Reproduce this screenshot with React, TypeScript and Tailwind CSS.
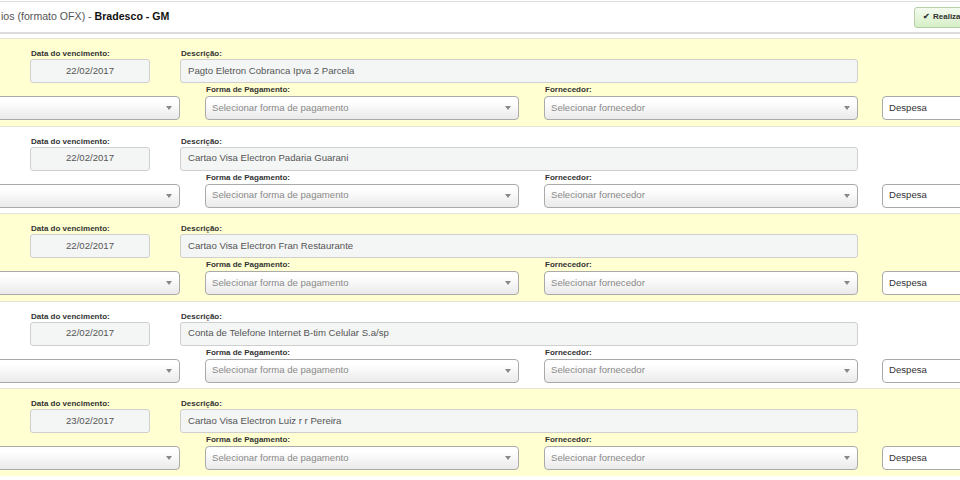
const rows = [
  { date: "22/02/2017", desc: "Pagto Eletron Cobranca Ipva 2 Parcela" },
  { date: "22/02/2017", desc: "Cartao Visa Electron Padaria Guarani" },
  { date: "22/02/2017", desc: "Cartao Visa Electron Fran Restaurante" },
  { date: "22/02/2017", desc: "Conta de Telefone Internet B-tim Celular S.a/sp" },
  { date: "23/02/2017", desc: "Cartao Visa Electron Luiz r r Pereira" },
];

function Label({ text }: { text?: string }) {
  return (
    <div className="h-[10px] leading-[10px] text-[8px] font-bold text-[#333] pl-[1px] whitespace-nowrap">
      {text}
    </div>
  );
}

function Select({ text, placeholder }: { text: string; placeholder?: boolean }) {
  return (
    <div className="mt-[1px] h-[24px] flex items-center justify-between border border-[#aaa] rounded-[4px] bg-gradient-to-b from-white from-[20%] to-[#eaeaea] pl-[6px] pr-[7px]">
      <span className={"text-[9.6px] whitespace-nowrap " + (placeholder ? "text-[#8a8a8a]" : "text-[#444]")}>
        {text}
      </span>
      <svg width="6" height="4" viewBox="0 0 6 4" className="shrink-0">
        <path d="M0 0 L6 0 L3 4 Z" fill="#888" />
      </svg>
    </div>
  );
}

function Row({ date, desc, yellow }: { date: string; desc: string; yellow: boolean }) {
  return (
    <div
      className={
        "h-[87.5px] border-t border-[#e3e3d6] " + (yellow ? "bg-[#ffffd2]" : "bg-white")
      }
    >
      <div className="flex pt-[10px]">
        <div className="ml-[30px] w-[120px] flex flex-col">
          <Label text="Data do vencimento:" />
          <div className="h-[24px] flex items-center justify-center border border-[#cfcfcf] rounded-[3px] bg-[#f4f5f5] text-[9.6px] text-[#555]">
            {date}
          </div>
        </div>
        <div className="ml-[30px] w-[678px] flex flex-col">
          <Label text="Descrição:" />
          <div className="h-[24px] flex items-center border border-[#cfcfcf] rounded-[3px] bg-[#f4f5f5] pl-[7px] text-[9.6px] text-[#555] whitespace-nowrap">
            {desc}
          </div>
        </div>
      </div>
      <div className="flex mt-[2px]">
        <div className="-ml-[20px] w-[200px] shrink-0 flex flex-col">
          <Label />
          <Select text="" />
        </div>
        <div className="ml-[25px] w-[314px] shrink-0 flex flex-col">
          <Label text="Forma de Pagamento:" />
          <Select text="Selecionar forma de pagamento" placeholder />
        </div>
        <div className="ml-[25px] w-[314px] shrink-0 flex flex-col">
          <Label text="Fornecedor:" />
          <Select text="Selecionar fornecedor" placeholder />
        </div>
        <div className="ml-[24px] w-[120px] shrink-0 flex flex-col">
          <Label />
          <div className="mt-[1px] h-[24px] flex items-center border border-[#aaa] rounded-[4px] bg-white pl-[6px] text-[9.6px] text-[#333]">
            Despesa
          </div>
        </div>
      </div>
    </div>
  );
}

export default function App() {
  return (
    <div
      className="w-[960px] h-[480px] overflow-hidden bg-white"
      style={{ fontFamily: '"Liberation Sans", Arial, sans-serif' }}
    >
      {/* Header */}
      <div className="mt-[1px] h-[33px] border-t border-b-2 border-[#dcdcdc] flex items-center justify-between">
        <div className="pl-[1px] text-[10.6px] text-[#555] whitespace-nowrap">
          ios (formato OFX) - <span className="font-bold text-[#111]">Bradesco - GM</span>
        </div>
        <div className="h-[21px] w-[60px] -mr-[14px] flex items-center border border-[#b7cfa8] rounded-[3px] bg-gradient-to-b from-[#f4fbef] to-[#d5efc6] pl-[8px] text-[8px] font-bold text-[#333] whitespace-nowrap overflow-hidden">
          <span className="mr-[3px] text-[8px]">✔</span>Realizar
        </div>
      </div>
      <div className="h-[4px]" />
      {rows.map((r, i) => (
        <Row key={i} date={r.date} desc={r.desc} yellow={i % 2 === 0} />
      ))}
    </div>
  );
}
